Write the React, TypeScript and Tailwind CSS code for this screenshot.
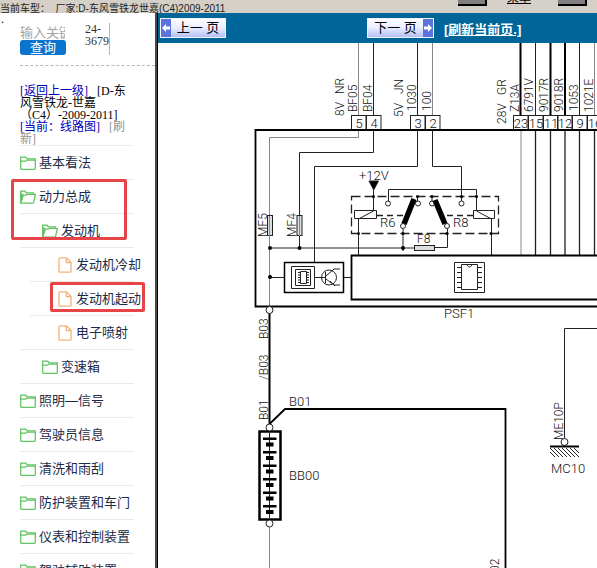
import React from 'react';

type Kind = 'closed' | 'open' | 'file';
type Item = { label: string; kind: Kind; level: 0 | 1 | 2; shortRule?: boolean };

const items: Item[] = [
  { label: '基本看法', kind: 'closed', level: 0 },
  { label: '动力总成', kind: 'open', level: 0 },
  { label: '发动机', kind: 'open', level: 1 },
  { label: '发动机冷却', kind: 'file', level: 2, shortRule: true },
  { label: '发动机起动', kind: 'file', level: 2, shortRule: true },
  { label: '电子喷射', kind: 'file', level: 2 },
  { label: '变速箱', kind: 'closed', level: 1 },
  { label: '照明—信号', kind: 'closed', level: 0 },
  { label: '驾驶员信息', kind: 'closed', level: 0 },
  { label: '清洗和雨刮', kind: 'closed', level: 0 },
  { label: '防护装置和车门', kind: 'closed', level: 0 },
  { label: '仪表和控制装置', kind: 'closed', level: 0 },
  { label: '驾驶辅助装置', kind: 'closed', level: 0 },
];

const indent = { 0: 'gap-[3px] pl-0', 1: 'gap-[3px] pl-[22px]', 2: 'gap-1 pl-[38px]' };
const indentShort = 'gap-1 pl-[28px]';

function TreeIcon({ kind }: { kind: Kind }) {
  if (kind === 'file') {
    return (
      <svg width="14" height="16" viewBox="0 0 14 16" fill="none" stroke="#f2b27c" strokeWidth="1.3" className="shrink-0">
        <path d="M2 .8h6.5L13 5.3v8.9a1 1 0 0 1-1 1H2a1 1 0 0 1-1-1V1.8a1 1 0 0 1 1-1z" />
        <path d="M8.3 1v4.5H13" />
      </svg>
    );
  }
  return (
    <svg width="16" height="14" viewBox="0 0 16 14" fill="none" stroke="#62c462" strokeWidth="1.3" className="shrink-0">
      {kind === 'closed' ? (
        <>
          <path d="M.7 12.5V1.2h5l1.5 1.6h8.1v9.7q0 .8-.8.8h-13q-.8 0-.8-.8z" />
          <path d="M.7 5.2h4.8l1.5-1h8.3" />
        </>
      ) : (
        <>
          <path d="M.7 12.8V1.2h4.2l1.5 1.6h7v2" />
          <path d="M.8 13 3.2 5.2h3l1.3-.8h7.9L13.6 12.4q-.2.7-1 .7z" />
          <path d="M1.5 3v7L3 4.5" />
        </>
      )}
    </svg>
  );
}

function Sidebar() {
  return (
    <aside className="relative w-[158px] shrink-0 overflow-hidden border-r border-black bg-white">
      <div className="h-full border-r-2 border-[#484848] pl-5">
        <span className="absolute top-0 left-px font-['Liberation_Serif',serif] text-xs leading-3">.</span>
        <form className="flex h-[53px] border-b border-dashed border-[#b8b8b8] pt-[10px]" onSubmit={(e) => e.preventDefault()}>
          <div className="flex w-[46px] flex-col pt-[3px]">
            <input
              aria-label="输入关键字"
              placeholder="输入关键字"
              className="h-[14px] w-[45px] text-[13px] leading-[14px] outline-none placeholder:text-[#a3a3a3]"
            />
            <button className="h-[15px] rounded-[3px] bg-[#0b74cf] text-[13px] leading-[14px] text-white">查询</button>
          </div>
          <div className="ml-[19px] h-8 w-[25px] border-r border-[#b5b5b5] font-['Liberation_Serif',serif] text-xs leading-3 text-[#333]">
            24-
            <br />
            3679
          </div>
        </form>
        <div className="mt-[19px] mr-[21px] border-b border-[#eeeeee] font-['Liberation_Serif','Noto_Sans_CJK_SC',serif] text-xs leading-3 whitespace-nowrap">
          <a href="#up" className="text-[#0000b8]">[返回上一级]</a>
          <span className="ml-[9px]">[D-东</span>
          <br />
          风雪铁龙-世嘉
          <br />
          （C4）-2009-2011]
          <br />
          <a href="#current" className="text-[#0000b8]">[当前：线路图]</a>
          <a href="#refresh" className="ml-[9px] text-[#929292]">[刷</a>
          <br />
          <a href="#refresh" className="text-[#929292]">新]</a>
        </div>
        <ul className="mr-[21px]">
          {items.map((it) => (
            <li key={it.label} className={`h-[34px] border-b border-[#eaeaea] ${it.shortRule ? 'ml-[10px]' : 'ml-0'}`}>
              <a
                href="#item"
                className={`flex h-[33px] items-center text-[13px] leading-4 whitespace-nowrap text-[#1c2b4a] ${it.shortRule ? indentShort : indent[it.level]}`}
              >
                <TreeIcon kind={it.kind} />
                <span>{it.label}</span>
              </a>
            </li>
          ))}
        </ul>
      </div>
      <div className="absolute top-[166px] left-[11px] h-[61px] w-[116px] rounded-xs border-3 border-[#e64446]" />
      <div className="absolute top-[269px] left-[50px] h-[30px] w-[95px] rounded-xs border-3 border-[#e64446]" />
    </aside>
  );
}

function Arrow({ back }: { back?: boolean }) {
  return (
    <span className="flex w-[10px] shrink-0 items-center justify-center self-stretch bg-[#5b74dc]">
      <svg width="8" height="8" viewBox="0 0 8 8" fill="#fff">
        {back ? <path d="M0 4 4 0v2.5h4v3H4V8z" /> : <path d="M8 4 4 0v2.5H0v3h4V8z" />}
      </svg>
    </span>
  );
}

const pageButton =
  'flex h-5 items-center justify-between border border-[#f0f2ff] bg-linear-to-b from-white via-[#e8ecff] to-[#b4c0f5] text-[13px] leading-4 text-black';

function Toolbar() {
  return (
    <div className="flex h-[30px] shrink-0 items-center bg-[#006699] pl-[2px] whitespace-nowrap">
      <button className={`${pageButton} w-[66px]`}>
        <Arrow back />
        <span className="flex-1">上一 页</span>
      </button>
      <button className={`${pageButton} ml-[141px] w-[67px]`}>
        <span className="flex-1">下一 页</span>
        <Arrow />
      </button>
      <a href="#reload" className="mt-1 ml-[10px] text-[13px] leading-4 font-bold text-white underline">[刷新当前页.]</a>
    </div>
  );
}

const upright: [number, number, string][] = [
  [344, 116, '8V'], [344, 94, 'NR'], [357, 112, 'BF05'], [372, 112, 'BF04'],
  [403, 117, '5V'], [403, 94, 'JN'], [416, 111, '1030'], [431, 111, '100'],
  [506, 124, '28V'], [506, 95, 'GR'], [519, 112, 'Z13A'], [533, 112, '6791V'],
  [548, 112, '9017R'], [563, 112, '9018R'], [578, 111, '1053'], [593, 112, '1021E'],
  [267, 237, 'MF5'], [296, 237, 'MF4'], [268, 339, 'B03'], [268, 380, '/B03'],
  [268, 420, 'B01'], [563, 440, 'ME10P'], [499, 572, '02'],
];

const level: [number, number, string][] = [
  [359, 180, '+12V'], [380, 227, 'R6'], [453, 227, 'R8'], [417, 243, 'F8'],
  [444, 318, 'PSF1'], [289, 406, 'B01'], [289, 480, 'BB00'], [551, 473, 'MC10'],
];

const pins: [number, string][] = [
  [351, '5'], [366, '4'], [410, '3'], [425, '2'], [513, '23'],
  [528, '15'], [543, '11'], [557, '12'], [572, '9'], [587, '16'],
];

const dots: [number, number][] = [
  [270, 248], [299.5, 248], [403, 248], [270, 277], [373.5, 196.5], [417.5, 196.5], [432, 196.5],
  [461.5, 196.5], [476.5, 196.5], [358.5, 233.5], [403, 233.5], [447, 233.5], [491, 233.5],
];

const plates = [438.5, 452, 465.5, 479, 492.5, 506];

function Diagram() {
  return (
    <svg width="439" height="525" viewBox="158 43 439 525" fill="none" stroke="#222" strokeWidth="1" className="shrink-0" role="img" aria-label="PSF1">
      <g stroke="#888">
        <path d="M358.5 43v72M432.5 43v72M594.5 43v72" />
        <path d="M358.5 131v6.5H269.5V306M521 131V255M269.5 527v41" />
      </g>
      <path d="M373.5 43v72M417.5 43v72M535.5 43v72M579.5 43v72" />
      <path d="M520.5 43v72M550.5 43v72M565 43v72" stroke="#000" strokeWidth="2" />
      {pins.map(([x]) => <rect key={x} x={x + 0.5} y="115.5" width="14.5" height="14" />)}
      <path d="M597 130H255.5V306.5H597" stroke="#000" strokeWidth="1.8" />
      <path d="M373.5 131v21.5H299.5V248M417.5 131v35.5H314.5V262M432.5 131v35.5H461.5V201" />
      <path d="M535.5 131V255M550.5 131V255M565 131V255M579.5 131V255M594.5 131V255" strokeWidth="1.3" />
      <g fill="#ddd">
        <rect x="267.5" y="215.5" width="5" height="20" />
        <rect x="297" y="215.5" width="5" height="20" />
        <rect x="414.5" y="245.5" width="20" height="5" />
      </g>
      <path d="M269.5 216v20M299.5 216v20" stroke="#888" />
      <path d="M369 181h9.5l-4.8 9z" fill="#000" />
      <path d="M373.5 188v23l-15 8V255M354.5 210.5h22v8h-22zM473.5 210.5h21v8h-21zM476.5 211l15 8V255" />
      <path d="M388.5 201V189.5H476.5V211M417.5 196v5M432 196v5" />
      <path d="M351.5 196.5H498.5V233.5H351.5z" strokeWidth="1.3" strokeDasharray="9 4" />
      <path d="M377 215.5h29M447 215.5h27" strokeWidth="1.3" strokeDasharray="6 4" />
      <g fill="#fff">
        <circle cx="388" cy="203.5" r="2.5" />
        <circle cx="418" cy="203.5" r="2.5" />
        <circle cx="432" cy="203.5" r="2.5" />
        <circle cx="461.5" cy="203.5" r="2.5" />
      </g>
      <path d="M414 199 404 224M435 200l10 24" stroke="#000" strokeWidth="5.5" />
      <circle cx="403" cy="226" r="2.5" fill="#fff" />
      <circle cx="447" cy="226" r="2.5" fill="#fff" />
      <path d="M403 229v22M447.5 229v18.5H435M269.5 248H414M269.5 277.5H284M344 277.5h7" />
      {dots.map(([x, y]) => <circle key={`${x}-${y}`} cx={x} cy={y} r={y > 240 ? 2 : 1.5} fill="#000" stroke="none" />)}
      <path d="M284.5 262.5h59v30h-59z" stroke="#000" strokeWidth="1.5" />
      <path d="M597 255.5H351.5V299.5H597" stroke="#000" strokeWidth="1.8" />
      <path d="M291.5 266.5h23v22h-23zM295.5 269.5h15v16h-15zM300.5 271.5h6v12h-6z" />
      <path d="M299 272v12M308 272v12" strokeWidth="2" strokeDasharray="1 1.5" />
      <circle cx="329" cy="277.5" r="7.5" />
      <path d="M315 277.5h10M325.5 272v11M326 276l8-7h6M326 279l8 6h6M330 281l5 5" />
      <path d="M454.5 262.5h30v30h-30zM461.5 264.5h16v25h-16zM467 265q2.5 4 5 0" />
      <path d="M457 267.5h4M457 272.5h4M457 277.5h4M457 282.5h4M457 287.5h4M478 267.5h4M478 272.5h4M478 277.5h4M478 282.5h4M478 287.5h4" />
      <path d="M269.5 313V424" stroke="#000" strokeWidth="2" />
      <path d="M269.5 424 285 409H505.5V568" stroke="#000" strokeWidth="1.8" />
      <path d="M597 328.5H564.5V438" />
      <rect x="259.5" y="431.5" width="21" height="88" stroke="#000" strokeWidth="2.5" />
      <path d="M269.5 433v85" />
      {plates.map((y) => (
        <g key={y} stroke="none" fill="#000">
          <rect x="263" y={y - 1} width="13.5" height="2.5" />
          <rect x="266" y={y + 4} width="7.5" height="4" />
        </g>
      ))}
      <g fill="#fff">
        <circle cx="269.5" cy="310" r="3.5" />
        <circle cx="269.5" cy="427.5" r="3.5" />
        <circle cx="269.5" cy="523.5" r="3.5" />
        <circle cx="564.5" cy="442" r="3.5" />
      </g>
      <path d="M550 446.5h29" stroke="#000" strokeWidth="2" />
      <path d="m550 452 5 5M550 448l9 9M554 448l9 9M558 448l9 9M562 448l9 9M566 448l9 9M570 448l9 9M574 448l5 5" />
      <g fill="#111" stroke="none" className="font-['Roboto',sans-serif] font-light">
        {upright.map(([x, y, t]) => (
          <text key={`${t}-${x}-${y}`} transform={`translate(${x} ${y}) rotate(-90)`} fontSize="12">{t}</text>
        ))}
        {level.map(([x, y, t]) => <text key={`${t}-${x}`} x={x} y={y} fontSize={t === 'F8' ? 12 : 13}>{t}</text>)}
        {pins.map(([x, t]) => <text key={x} x={x + 8} y="128" fontSize="13" textAnchor="middle">{t}</text>)}
      </g>
    </svg>
  );
}

export default function App() {
  return (
    <div className="flex h-screen flex-col overflow-hidden bg-white font-['Liberation_Sans','Noto_Sans_CJK_SC',sans-serif]">
      <header className="flex h-[13px] shrink-0 items-start overflow-hidden bg-[#d4d0c8] whitespace-nowrap">
        <p className="flex-1 pt-[3px] text-[10px] leading-[11px] text-[#222]">当前车型：&nbsp; 厂家:D-东风雪铁龙世嘉(C4)2009-2011</p>
        <button aria-label="后退" className="h-[6px] w-[29px] border-r-2 border-b-2 border-black bg-[#808080]" />
        <a href="#menu" className="-mt-[10px] ml-5 h-4 w-6 text-xs leading-4 text-black underline">菜单</a>
        <button aria-label="前进" className="mr-[10px] ml-[27px] h-[6px] w-[29px] border-r-2 border-b-2 border-black bg-[#808080]" />
      </header>
      <div className="flex min-h-0 flex-1">
        <Sidebar />
        <main className="flex min-w-0 flex-1 flex-col overflow-hidden">
          <Toolbar />
          <Diagram />
        </main>
      </div>
    </div>
  );
}
